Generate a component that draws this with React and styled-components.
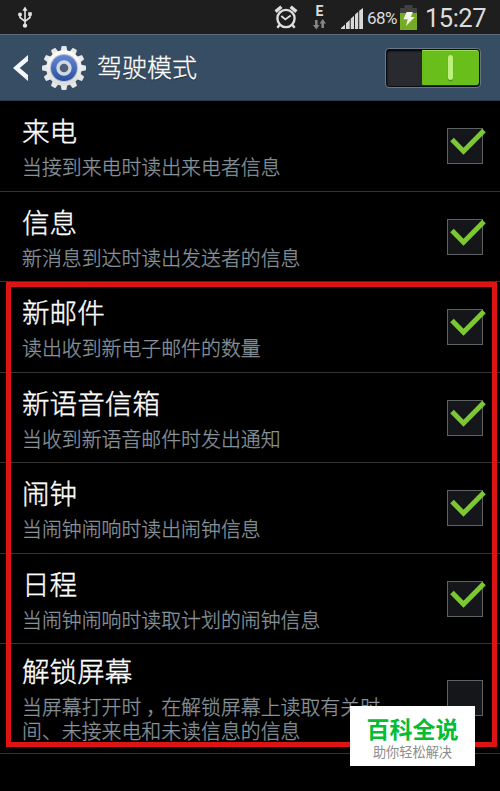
import React from "react";
import styled, { createGlobalStyle } from "styled-components";

/* sits in the middle of its cell, not at the left edge */
const Comma = styled.span`
  margin: 0 -5px 0 5px;
`;

const rows = [
  { title: "来电", text: "当接到来电时读出来电者信息", height: 91, checked: true },
  { title: "信息", text: "新消息到达时读出发送者的信息", height: 90, checked: true },
  { title: "新邮件", text: "读出收到新电子邮件的数量", height: 91, checked: true },
  { title: "新语音信箱", text: "当收到新语音邮件时发出通知", height: 90, checked: true },
  { title: "闹钟", text: "当闹钟闹响时读出闹钟信息", height: 91, checked: true },
  { title: "日程", text: "当闹钟闹响时读取计划的闹钟信息", height: 90, checked: true },
  {
    title: "解锁屏幕",
    text: (
      <>
        当屏幕打开时<Comma>，</Comma>在解锁屏幕上读取有关时间、未接来电和未读信息的信息
      </>
    ),
    height: 110,
    checked: false,
    tall: true,
  },
];

const UsbIcon = () => (
  <svg width="16" height="24" viewBox="0 0 16 24" fill="none" stroke="#e4e4e4" strokeWidth="1.6">
    <path d="M8 5v15M3 9.5v3l5 3.8M13 9v3.5l-5 3.8" />
    <path d="M8 1.6l2.6 4.2H5.4z" fill="#e4e4e4" stroke="none" />
    <circle cx="8" cy="20.6" r="2.2" fill="#e4e4e4" stroke="none" />
    <circle cx="3" cy="9.4" r="2" fill="#e4e4e4" stroke="none" />
    <path d="M11.2 7.2h3.6v3.6h-3.6z" fill="#e4e4e4" stroke="none" />
  </svg>
);

const AlarmIcon = () => (
  <svg width="24" height="26" viewBox="0 0 24 26" fill="none" stroke="#dedede" strokeWidth="2.4">
    <circle cx="12" cy="13.5" r="8.6" />
    <path d="M7.3 11l4 3.4 5.4-4" strokeWidth="1.9" />
    <path d="M1.6 6.6l5.8-4.8M22.4 6.6l-5.8-4.8" strokeWidth="3.4" />
    <path d="M5.8 19.8l-2.5 3M18.2 19.8l2.5 3" />
  </svg>
);

const DataArrows = () => (
  <svg width="13" height="11" viewBox="0 0 13 11" fill="#858585">
    <path d="M2 1h2.6v5h2L3.3 10.5 0 6h2zM8.4 9H11V4.5h2L9.7 0 6.5 4.5h1.9z" />
  </svg>
);

const SignalIcon = () => (
  <svg width="22" height="21" viewBox="0 0 22 21" fill="#d9d9d9">
    <path d="M0 21v-1l4-3.6V21zM5 21v-5.7L8.7 12V21zM9.7 21V10.8L13 7.8V21zM14 21V6.6l3.2-2.8V21zM18.2 21V2.8L22 0v21z" />
  </svg>
);

const BatteryIcon = () => (
  <svg width="17" height="25" viewBox="0 0 17 25">
    <path d="M4.5 0h8v3H17v22H0V3h4.5z" fill="#414141" />
    <path d="M0 8h17v17H0z" fill="#76ac25" />
    <path d="M6.6 7h6.2l-2 5h4L6 21l1.7-6.8H3.4z" fill="#f1f6e8" />
  </svg>
);

const BackIcon = () => (
  <svg width="16" height="28" viewBox="0 0 16 28" fill="#f5f8fa">
    <path d="M15 1v6L6.7 14l8.3 7v6L0 14z" />
  </svg>
);

const teeth = Array.from({ length: 12 }, (_, i) => i * 30);

const GearIcon = () => (
  <svg width="44" height="44" viewBox="0 0 44 44">
    <defs>
      <linearGradient id="steel" x1="0" y1="0" x2="0" y2="1">
        <stop offset="0" stopColor="#fff" />
        <stop offset="1" stopColor="#d9dbdd" />
      </linearGradient>
      <linearGradient id="blue" x1="0" y1="0" x2="0" y2="1">
        <stop offset="0" stopColor="#6589d4" />
        <stop offset="1" stopColor="#294f9f" />
      </linearGradient>
    </defs>
    {teeth.map((angle) => (
      <path
        key={angle}
        d="M18.6 6l.8-5.2q.2-.8 1-.8h3.2q.8 0 1 .8l.8 5.2z"
        fill="#e6e7e7"
        transform={`rotate(${angle} 22 22)`}
      />
    ))}
    <circle cx="22" cy="22" r="17.8" fill="url(#steel)" />
    <circle cx="22" cy="22" r="14" fill="#b9bec8" />
    <circle cx="22" cy="22" r="13" fill="url(#blue)" />
    <circle cx="22" cy="22" r="6" fill="#4f5f7c" stroke="#d3d8e2" strokeWidth="3.4" />
  </svg>
);

const CheckIcon = () => (
  <Tick width="36" height="28" viewBox="0 0 36 28" fill="none">
    <path d="M2 12.5l11.5 11.7L34 3.5" stroke="#7cc832" strokeWidth="5" />
  </Tick>
);

const App = () => {
  return (
    <>
      <GlobalStyle />
      <Screen>
        <StatusBar>
          <UsbIcon />
          <StatusIcons>
            <AlarmIcon />
            <Network>
              <span>E</span>
              <DataArrows />
            </Network>
            <SignalIcon />
            <Percent>68%</Percent>
            <BatteryIcon />
            <Clock>15:27</Clock>
          </StatusIcons>
        </StatusBar>
        <Header>
          <BackIcon />
          <GearIcon />
          <Heading>驾驶模式</Heading>
          <Switch>
            <Thumb />
          </Switch>
        </Header>
        <List>
          {rows.map((row) => (
            <Row key={row.title} $height={row.height} $tall={row.tall}>
              <Label>
                <Title>{row.title}</Title>
                <Summary>{row.text}</Summary>
              </Label>
              <Checkbox $tall={row.tall}>{row.checked && <CheckIcon />}</Checkbox>
            </Row>
          ))}
        </List>
        <Highlight />
        <Badge>
          <BadgeName>百科全说</BadgeName>
          <BadgeSlogan>助你轻松解决</BadgeSlogan>
        </Badge>
      </Screen>
    </>
  );
};

const GlobalStyle = createGlobalStyle`
  * {
    box-sizing: border-box;
  }

  body {
    margin: 0;
    background: #000;
  }

  svg {
    display: block;
    flex-shrink: 0;
  }
`;

const Screen = styled.div`
  position: relative;
  width: 500px;
  height: 791px;
  overflow: hidden;
  background: #000;
  color: #fff;
  font-family: Roboto, "Noto Sans CJK SC", sans-serif;
`;

const StatusBar = styled.div`
  display: flex;
  justify-content: space-between;
  height: 34px;
  padding: 5px 14px 0 17px;
  background: #1e1e1e;
`;

const StatusIcons = styled.div`
  display: flex;
  align-items: flex-start;
  color: #dcdcdc;
`;

const Network = styled.div`
  display: flex;
  flex-direction: column;
  align-items: center;
  width: 13px;
  margin: 0 15px 0 15px;
  font-size: 14px;
  font-weight: 700;
  line-height: 13px;

  svg {
    margin-top: 1px;
  }

  & + svg {
    margin-top: 3px;
  }
`;

const Percent = styled.span`
  width: 33px;
  font-size: 17px;
  line-height: 27px;
  margin-left: 4px;
  letter-spacing: -0.6px;
`;

const Clock = styled.span`
  width: 61px;
  margin-left: 8px;
  font-size: 25.5px;
  line-height: 26px;
  letter-spacing: -0.5px;
  white-space: nowrap;
`;

const Header = styled.div`
  display: flex;
  align-items: center;
  height: 67px;
  padding: 0 19px 0 13px;
  border-top: 1px solid #5b6c7c;
  border-bottom: 1px solid #263c4d;
  background: #364d63;

  svg + svg {
    margin-left: 13px;
  }
`;

const Heading = styled.div`
  flex: 1;
  margin-left: 11px;
  padding-top: 2px;
  font-size: 25px;
  font-weight: 300;
  line-height: 36px;
  text-shadow: 0 1px 1px rgba(0, 0, 0, 0.5);
  -webkit-text-stroke: 0.3px;
`;

const Switch = styled.div`
  display: flex;
  justify-content: flex-end;
  width: 96px;
  height: 40px;
  padding: 1px;
  border: 1px solid #6b7883;
  border-radius: 4px;
  background: #292a30;
  box-shadow: inset 0 0 0 1px #0c0d10, inset 1px 2px 2px #000;
`;

const Thumb = styled.div`
  display: flex;
  align-items: center;
  justify-content: center;
  width: 57px;
  height: 35px;
  border-top: 1px solid #96dc55;
  border-radius: 1px 3px 3px 1px;
  background: #6abe1c;

  &::before {
    content: "";
    width: 5px;
    height: 25px;
    border-radius: 3px;
    background: #bdf07c;
    box-shadow: 0 1px 1px #428010;
  }
`;

const List = styled.div`
  display: flex;
  flex-direction: column;
`;

const Row = styled.div`
  display: flex;
  justify-content: space-between;
  align-items: flex-start;
  height: ${(props) => props.$height}px;
  padding: ${(props) => (props.$tall ? 11 : 14)}px 17px 0 22px;
  border-bottom: 1px solid #343434;
`;

const Label = styled.div`
  width: 370px;
`;

const Title = styled.div`
  font-size: 27.6px;
  font-weight: 300;
  line-height: 36px;
  -webkit-text-stroke: 0.35px;
`;

const Summary = styled.div`
  margin-top: 6px;
  color: #87929a;
  font-size: 19.9px;
  font-weight: 300;
  line-height: 24px;
  -webkit-text-stroke: 0.3px;
`;

const Checkbox = styled.div`
  position: relative;
  width: 36px;
  height: 36px;
  margin-top: ${(props) => (props.$tall ? 25 : 13)}px;
  border: 1px solid #606163;
  background: #15161a;
`;

const Tick = styled.svg`
  position: absolute;
  left: 2px;
  top: -2px;
`;

const Highlight = styled.div`
  position: absolute;
  left: 6px;
  top: 282px;
  width: 491px;
  height: 465px;
  border: 5px solid #dc1414;
`;

const Badge = styled.div`
  position: absolute;
  left: 350px;
  top: 706px;
  display: flex;
  flex-direction: column;
  align-items: center;
  width: 125px;
  height: 60px;
  padding-top: 12px;
  background: #fff;
`;

const BadgeName = styled.div`
  color: #05bd33;
  font-size: 23px;
  font-weight: 700;
  line-height: 26px;
`;

const BadgeSlogan = styled.div`
  color: #8c8c8c;
  font-size: 13.2px;
  line-height: 17px;
`;

export default App;
